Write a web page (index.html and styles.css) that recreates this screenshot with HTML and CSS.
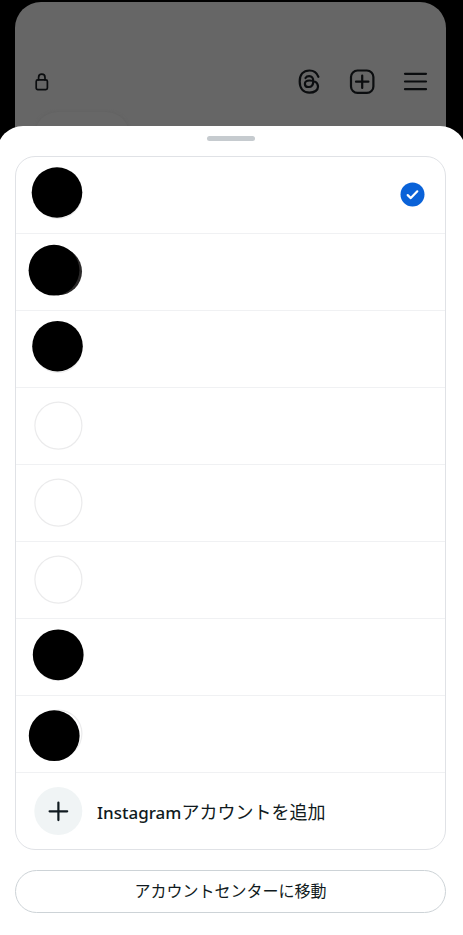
FILE: index.html
```html
<!DOCTYPE html>
<html lang="ja">
<head>
    <meta charset="UTF-8">
    <meta name="viewport" content="width=device-width, initial-scale=1.0">
    <title>Instagram</title>
    <link rel="stylesheet" href="styles.css">
</head>
<body>
    <div class="profile">
        <header class="profile-header">
            <svg class="lock" viewBox="0 0 14 18" aria-hidden="true">
                <rect x="1.2" y="6.8" width="11.2" height="9.8" rx="1.6"/>
                <path d="M3.6 6.8V4.4a3.2 3.2 0 0 1 6.4 0v2.4"/>
            </svg>
            <nav class="actions">
                <button class="icon-button" aria-label="Threads">
                    <svg viewBox="0 0 26 26">
                        <path d="M22.4 7.8C20.9 3.6 18 1.5 13.5 1.5C7 1.5 3.7 6 3.7 12.6S7 23.7 13.5 23.7C18.5 23.7 22 21.2 22 17.8C22 13.5 18 11.5 13.5 11.5C10.5 11.5 8.9 12.9 8.9 14.9S10.4 18 12.6 18C15.6 18 17.3 16 17.3 12.2C17.3 8.7 15.8 7.1 13.2 7.1C11.4 7.1 10.2 7.8 9.5 9"/>
                    </svg>
                </button>
                <button class="icon-button" aria-label="作成">
                    <svg viewBox="0 0 26 26">
                        <rect x="2" y="1.5" width="22.4" height="22.4" rx="6.5"/>
                        <path d="M13.2 6.5v12.4M7 12.7h12.4"/>
                    </svg>
                </button>
                <button class="icon-button" aria-label="メニュー">
                    <svg viewBox="0 0 26 26">
                        <path d="M3 4.8h21M3 12.5h21M3 20.2h21"/>
                    </svg>
                </button>
            </nav>
        </header>
        <div class="note"></div>
    </div>

    <main class="sheet">
        <div class="handle"></div>
        <ul class="accounts">
            <li>
                <button class="account" aria-label="アカウント 1">
                    <svg class="avatar" viewBox="0 0 48 48">
                        <circle class="ring" cx="24" cy="24" r="23.5"/>
                        <circle cx="23" cy="21.5" r="25.3"/>
                    </svg>
                    <svg class="check" viewBox="0 0 24 24">
                        <circle cx="11.5" cy="11.5" r="12"/>
                        <path d="M6.7 12.1l3.1 3 6.5-6.8"/>
                    </svg>
                </button>
            </li>
            <li>
                <button class="account" aria-label="アカウント 2">
                    <svg class="avatar" viewBox="0 0 48 48">
                        <circle class="photo" cx="24.3" cy="23.5" r="23.7"/>
                        <circle cx="20" cy="22.2" r="25.4"/>
                    </svg>
                </button>
            </li>
            <li>
                <button class="account" aria-label="アカウント 3">
                    <svg class="avatar" viewBox="0 0 48 48">
                        <circle class="ring" cx="24" cy="24" r="23.5"/>
                        <circle cx="23.5" cy="21.2" r="25.3"/>
                    </svg>
                </button>
            </li>
            <li>
                <button class="account" aria-label="アカウント 4">
                    <svg class="avatar" viewBox="0 0 48 48">
                        <circle class="ring" cx="24.4" cy="23.6" r="23.5"/>
                    </svg>
                </button>
            </li>
            <li>
                <button class="account" aria-label="アカウント 5">
                    <svg class="avatar" viewBox="0 0 48 48">
                        <circle class="ring" cx="24.4" cy="23.6" r="23.5"/>
                    </svg>
                </button>
            </li>
            <li>
                <button class="account" aria-label="アカウント 6">
                    <svg class="avatar" viewBox="0 0 48 48">
                        <circle class="ring" cx="24.4" cy="23.6" r="23.5"/>
                    </svg>
                </button>
            </li>
            <li>
                <button class="account" aria-label="アカウント 7">
                    <svg class="avatar" viewBox="0 0 48 48">
                        <circle class="ring" cx="24" cy="24" r="23.5"/>
                        <circle cx="24.2" cy="21.8" r="25.4"/>
                    </svg>
                </button>
            </li>
            <li>
                <button class="account" aria-label="アカウント 8">
                    <svg class="avatar" viewBox="0 0 48 48">
                        <circle class="ring" cx="24.4" cy="23.6" r="23.5"/>
                        <circle cx="20.2" cy="25.7" r="25.4"/>
                    </svg>
                </button>
            </li>
            <li>
                <button class="account add">
                    <svg class="avatar" viewBox="0 0 48 48">
                        <circle class="add-bg" cx="24.3" cy="24" r="24"/>
                        <path class="plus" d="M24.4 15.5v17.6M15.6 24.3h17.6"/>
                    </svg>
                    <span><span class="brand">Instagram</span>アカウントを追加</span>
                </button>
            </li>
        </ul>
        <button class="center-button">アカウントセンターに移動</button>
    </main>
</body>
</html>
```
FILE: styles.css
```css
* {
    box-sizing: border-box;
}
body {
    font-family: 'Noto Sans', 'Noto Sans CJK JP', sans-serif;
    display: flex;
    flex-direction: column;
    min-height: 100vh;
    margin: 0;
    background: #000;
    color: #101a20;
    overflow-x: hidden;
}
button {
    padding: 0;
    background: none;
    border: none;
    color: inherit;
    font-family: inherit;
    cursor: pointer;
}
svg {
    display: block;
    flex-shrink: 0;
}

/* dimmed profile page behind the sheet */
.profile {
    margin: 2px 17px 0 15px;
    padding: 67px 18px 0 20px;
    background: #666;
    border-radius: 26px 26px 0 0;
}
.profile-header {
    display: flex;
    align-items: center;
    justify-content: space-between;
}
.profile-header svg {
    fill: none;
    stroke: #0b0d0f;
    stroke-width: 2.2;
    stroke-linecap: round;
    stroke-linejoin: round;
}
.profile-header .lock {
    width: 14px;
    height: 18px;
    stroke-width: 1.7;
}
.actions {
    display: flex;
    gap: 27px;
}
.icon-button {
    width: 26px;
    height: 26px;
}
.note {
    width: 94px;
    height: 44px;
    margin-top: 17px;
    border-radius: 22px;
    background: #676767;
    box-shadow: 0 0 3px #606060;
}

/* bottom sheet */
.sheet {
    position: relative;
    flex: 1;
    margin: -30px -3px 0;
    padding: 10px 20px 23px 18px;
    background: #fff;
    border-radius: 26px 26px 0 0;
}
.handle {
    width: 48px;
    height: 5px;
    margin: 0 auto 15px;
    border-radius: 3px;
    background: #c6cbcf;
}
.accounts {
    list-style: none;
    margin: 0;
    padding: 0;
    border: 1px solid #e0e2e6;
    border-radius: 20px;
}
.accounts li + li {
    border-top: 1px solid #f0f1f3;
}
.account {
    display: flex;
    align-items: center;
    gap: 15px;
    width: 100%;
    height: 76px;
    padding: 0 20px 0 18px;
    text-align: left;
}
.avatar {
    width: 48px;
    height: 48px;
    overflow: visible;
}
.ring {
    fill: #fff;
    stroke: #ebebec;
    stroke-width: 1.2;
}
.photo {
    fill: #2c2a2a;
}
.check {
    width: 24px;
    height: 24px;
    margin-left: auto;
    fill: #0a62d8;
    overflow: visible;
}
.check path {
    fill: none;
    stroke: #fff;
    stroke-width: 2.2;
    stroke-linecap: round;
    stroke-linejoin: round;
}
.add-bg {
    fill: #f0f4f5;
}
.plus {
    stroke: #101a20;
    stroke-width: 2.2;
    stroke-linecap: round;
}
.add {
    font-size: 18px;
}
.brand {
    font-size: 17px;
    font-weight: 500;
}
.center-button {
    display: block;
    width: 100%;
    height: 43px;
    margin-top: 20px;
    padding-bottom: 3px;
    border: 1px solid #cdd3d7;
    border-radius: 22px;
    font-size: 16px;
}
```
